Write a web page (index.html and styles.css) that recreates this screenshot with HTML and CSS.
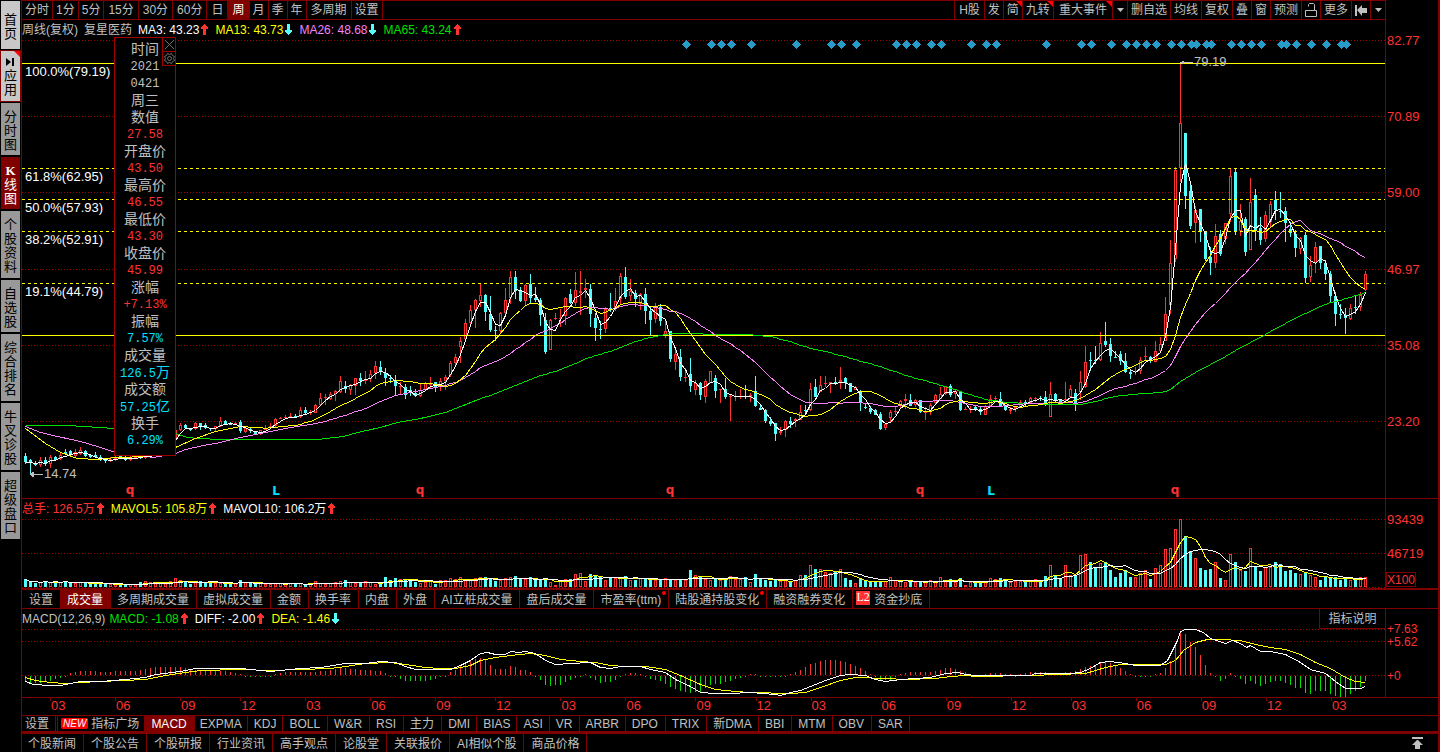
FILE: index.html
```html
<!DOCTYPE html>
<html lang="zh-CN">
<head>
<meta charset="utf-8">
<title>复星医药 周线</title>
<link rel="stylesheet" href="styles.css">
</head>
<body>
<svg class="defs" aria-hidden="true">
  <symbol id="up" viewBox="0 0 7 11"><path d="M3 0h1v1h1v1h1v1h1v2H5v6H2V5H0V3h1V2h1V1h1z" fill="#ff3232"/></symbol>
  <symbol id="down" viewBox="0 0 7 11"><path d="M3 11h1v-1h1V9h1V8h1V6H5V0H2v6H0v2h1v1h1v1h1z" fill="#54fcfc"/></symbol>
</svg>

<nav class="side">
  <button class="light home"><span>首页</span></button>
  <button class="light apps flag"><svg width="9" height="9" viewBox="0 0 9 9"><path d="M0 0v8l5-4zM6 0h2v8H6z"/></svg><span>应用</span></button>
  <button class="s3"><span>分时图</span></button>
  <button class="s3 on"><span><b>K</b>线图</span></button>
  <button class="s4"><span>个股资料</span></button>
  <button class="s3"><span>自选股</span></button>
  <button class="s4"><span>综合排名</span></button>
  <button class="s4"><span>牛叉诊股</span></button>
  <button class="s4"><span>超级盘口</span></button>
</nav>

<main>
  <header class="row">
    <div class="toolbar">
      <button>分时</button><button>1分</button><button>5分</button><button class="mins">15分</button><button class="mins">30分</button><button class="mins">60分</button><button class="mins">日</button><button class="mins on">周</button><button>月</button><button>季</button><button>年</button><button class="mins">多周期</button><button>设置</button>
      <div class="space"></div>
      <button class="mins first">H股</button><button>发</button><button class="flag">简</button><button class="flag">九转</button><button class="wide flag">重大事件</button><button class="drop" aria-label="展开"><svg width="7" height="4" viewBox="0 0 7 4"><path d="M0 0h7L3.500 4z"/></svg></button><button>删自选</button><button>均线</button><button>复权</button><button>叠</button><button>窗</button><button>预测</button><button aria-label="锁定"><svg width="12" height="15" viewBox="0 0 12 15"><path d="M.5 7.500h11v6h-11zM3.500 3.500v-2l1-1h4l1 1v6" fill="none" stroke="#c0c0c0"/></svg></button><button>更多</button><button aria-label="收起"><svg width="12" height="11" viewBox="0 0 12 11"><path d="M0 0h2v11H0zM2 5l5-5v3h5v5H7v3z"/></svg></button><button class="drop last" aria-label="展开"><svg width="7" height="4" viewBox="0 0 7 4"><path d="M0 0h7L3.500 4z"/></svg></button>
    </div>
    <div class="gutter"></div>
  </header>

  <section class="row price">
    <div class="plot">
      <div class="legend">
        <span class="name">周线(复权)</span><span class="name">复星医药</span>
        <span class="white">MA3: 43.23<svg><use href="#up"/></svg></span>
        <span class="yellow">MA13: 43.73<svg><use href="#down"/></svg></span>
        <span class="pink">MA26: 48.68<svg><use href="#down"/></svg></span>
        <span class="green">MA65: 43.24<svg><use href="#up"/></svg></span>
      </div>
      <svg id="price" class="chart grow" viewBox="22 40 1363 458" preserveAspectRatio="none"></svg>
      <aside class="tip">
        <div class="tools"><button aria-label="关闭"><svg width="9" height="9" viewBox="0 0 9 9"><path d="M0 0l9 9M9 0l-9 9"/></svg></button><button aria-label="设置"><svg width="11" height="11" viewBox="0 0 11 11"><path d="M3.500.5l2 1 2-1 1 2 2 1-1 2 1 2-2 1-1 2-2-1-2 1-1-2-2-1 1-2-1-2 2-1z"/><circle cx="5.500" cy="5.500" r="2"/></svg></button></div>
        <dl>
          <dt>时间</dt><dd class="gray">2021</dd><dd class="gray">0421</dd><dt>周三</dt>
          <dt>数值</dt><dd>27.58</dd>
          <dt>开盘价</dt><dd>43.50</dd>
          <dt>最高价</dt><dd>46.55</dd>
          <dt>最低价</dt><dd>43.30</dd>
          <dt>收盘价</dt><dd>45.99</dd>
          <dt>涨幅</dt><dd>+7.13%</dd>
          <dt>振幅</dt><dd class="cyan">7.57%</dd>
          <dt>成交量</dt><dd class="cyan">126.5<span>万</span></dd>
          <dt>成交额</dt><dd class="cyan">57.25<span>亿</span></dd>
          <dt>换手</dt><dd class="cyan">6.29%</dd>
        </dl>
      </aside>
    </div>
    <svg class="axis" viewBox="0 20 52 478" preserveAspectRatio="none">
      <text x="1" y="45">82.77</text><text x="1" y="121">70.89</text><text x="1" y="197">59.00</text><text x="1" y="274">46.97</text><text x="1" y="350">35.08</text><text x="1" y="426">23.20</text>
    </svg>
  </section>

  <section class="row volume">
    <div class="plot">
      <div class="legend">
        <span class="red">总手: 126.5万<svg><use href="#up"/></svg></span>
        <span class="yellow">MAVOL5: 105.8万<svg><use href="#up"/></svg></span>
        <span class="white">MAVOL10: 106.2万<svg><use href="#up"/></svg></span>
      </div>
      <svg id="volume" class="chart h69" viewBox="22 519 1363 69" preserveAspectRatio="none"></svg>
    </div>
    <svg class="axis" viewBox="0 499 52 89" preserveAspectRatio="none">
      <text x="1" y="524">93439</text><text x="1" y="558">46719</text>
      <path d="M.5 572.500h29v14H.5z" class="box"/><text x="1" y="584" class="small">X100</text>
    </svg>
  </section>

  <nav class="tabs mid">
    <button>设置</button><button class="on">成交量</button><button>多周期成交量</button><button>虚拟成交量</button><button>金额</button><button>换手率</button><button>内盘</button><button>外盘</button><button>AI立桩成交量</button><button>盘后成交量</button><button class="dot">市盈率(ttm)</button><button class="dot">陆股通持股变化</button><button>融资融券变化</button><button class="l2"><i>L2</i>资金抄底</button>
  </nav>

  <section class="row macd">
    <div class="plot">
      <div class="legend">
        <span class="gray">MACD(12,26,9)</span>
        <span class="green">MACD: -1.08<svg><use href="#up"/></svg></span>
        <span class="white">DIFF: -2.00<svg><use href="#up"/></svg></span>
        <span class="yellow">DEA: -1.46<svg><use href="#down"/></svg></span>
        <button class="help">指标说明</button>
      </div>
      <svg id="macd" class="chart h68" viewBox="22 629 1363 68" preserveAspectRatio="none"></svg>
    </div>
    <svg class="axis" viewBox="0 609 52 88" preserveAspectRatio="none">
      <text x="1" y="633" class="small">+7.63</text><text x="1" y="646" class="small">+5.62</text><text x="1" y="680" class="small">+0</text>
    </svg>
  </section>

  <div class="row dates">
    <svg id="dates" class="chart h17" viewBox="22 698 1363 17" preserveAspectRatio="none"></svg>
    <div class="gutter"></div>
  </div>

  <nav class="tabs ind">
    <button class="set">设置</button><button class="plaza"><i>NEW</i>指标广场</button><button class="on roomy">MACD</button><button class="tight">EXPMA</button><button>KDJ</button><button class="roomy">BOLL</button><button class="roomy">W&amp;R</button><button class="roomy">RSI</button><button class="roomy">主力</button><button>DMI</button><button>BIAS</button><button>ASI</button><button>VR</button><button>ARBR</button><button class="roomy">DPO</button><button class="roomy">TRIX</button><button>新DMA</button><button class="roomy">BBI</button><button>MTM</button><button class="roomy">OBV</button><button>SAR</button>
  </nav>

  <footer class="tabs foot">
    <button>个股新闻</button><button>个股公告</button><button>个股研报</button><button>行业资讯</button><button>高手观点</button><button>论股堂</button><button>关联报价</button><button>AI相似个股</button><button>商品价格</button>
    <div class="space"></div>
    <button class="top" aria-label="置顶"><svg width="11" height="12" viewBox="0 0 11 12"><path d="M0 0h11v2H0zM5 3h1l5 5H8v4H3V8H0z"/></svg></button>
  </footer>
</main>
<script src="chart.js"></script>
</body>
</html>
```

FILE: styles.css
```css
* { box-sizing: border-box; }

body {
  margin: 0;
  display: flex;
  min-height: 100vh;
  background: #000;
  color: #c0c0c0;
  font: 12px/18px "Liberation Sans", "Noto Sans CJK SC", sans-serif;
}

button {
  margin: 0;
  padding: 0;
  border: 0;
  background: none;
  color: inherit;
  font: inherit;
  white-space: nowrap;
  cursor: pointer;
}

button svg { fill: #c0c0c0; }
.defs { position: absolute; width: 0; height: 0; }
.space { flex: 1; }

.white { color: #fff; }
.yellow { color: #ff0; }
.pink { color: #f880f8; }
.green { color: #00e000; }
.red { color: #ff3232; }

/* left rail */
.side {
  width: 21px;
  padding: 1px 1px 0 1px;
  display: flex;
  flex-direction: column;
  gap: 2px;
  flex: none;
}

.side button {
  display: flex;
  flex-direction: column;
  align-items: center;
  justify-content: center;
  padding-top: 3px;
  background: #999;
  color: #000;
  font-size: 13px;
  line-height: 14px;
}

.side span { width: 14px; white-space: normal; word-break: break-all; text-align: center; }
.side b { display: block; font-family: "Liberation Serif", serif; }
.side .light { background: #c8c8c8; }
.side .home { height: 48px; }
.side .apps { height: 50px; outline: 1px solid #800000; }
.side .apps svg { fill: #000; margin-bottom: 2px; }
.side .s3 { height: 52px; }
.side .s4 { height: 67px; }
.side .on { background: #800000; color: #fff; }

.flag { position: relative; }
.flag::after {
  content: "";
  position: absolute;
  top: 0;
  right: 0;
  border: 3px solid transparent;
  border-top-color: #f00;
  border-right-color: #f00;
}

main {
  flex: 1;
  min-width: 0;
  display: flex;
  flex-direction: column;
  border-left: 1px solid #800000;
  border-right: 2px solid #800000;
}

.row { display: flex; }
.gutter, .axis { width: 52px; flex: none; }

.toolbar {
  flex: 1;
  display: flex;
  height: 20px;
  border: solid #800000;
  border-width: 1px 1px 1px 0;
  line-height: 20px;
}

.toolbar button {
  padding: 0 3px;
  border-right: 1px solid #800000;
  display: flex;
  align-items: center;
}

.toolbar .wide { padding: 0 5px; }
.toolbar .mins { padding: 0 4px; }
.toolbar .first { border-left: 1px solid #800000; }
.toolbar .drop { padding: 0 3px 0 4px; }
.toolbar .last { border-right: 0; }
.on { background: #800000; color: #fff; }

.plot {
  position: relative;
  flex: 1;
  min-width: 0;
  display: flex;
  flex-direction: column;
  border-right: 1px solid #800000;
}

.price { flex: 1; border-bottom: 1px solid #800000; }
.legend { display: flex; height: 20px; gap: 7px; line-height: 20px; white-space: nowrap; }
.legend .name { margin-right: -1px; }
.legend span svg { width: 7px; height: 11px; margin-left: 2px; vertical-align: -1px; }
.chart { display: block; width: 100%; }
.grow { flex: 1; min-height: 458px; }
.h69 { height: 69px; }
.h68 { height: 68px; }
.h17 { height: 17px; flex: 1; min-width: 0; }
.axis { align-self: stretch; }
.axis text, .chart text { font-size: 13px; fill: #ff3232; }
.axis .small { font-size: 12px; }
.axis .box { fill: none; stroke: #800000; shape-rendering: crispEdges; }
.chart .fib { fill: #fff; }
.chart .note { fill: #c0c0c0; }
.chart .mark { font: bold 12px "DejaVu Sans", sans-serif; text-anchor: middle; }

/* cursor data window */
.tip {
  position: absolute;
  left: 92px;
  top: 17px;
  width: 62px;
  height: 419px;
  background: #000;
  border: 1px solid #a00000;
}

.tip dl { margin: 0; padding-top: 3px; text-align: center; }
.tip dt { font-size: 14px; line-height: 17px; }
.tip dd { margin: 0; height: 17px; padding-top: 1px; color: #ff3232; font: 12px/17px "Liberation Mono", "Noto Sans CJK SC", monospace; }
.tip dd span { font-size: 14px; line-height: 16px; }
.tip .gray { color: #c0c0c0; }
.tip .cyan { color: #00e0ff; }
.tools { position: absolute; right: 0; top: 0; width: 13px; }
.tools button {
  display: grid;
  place-items: center;
  width: 13px;
  height: 14px;
  border: solid #a00000;
  border-width: 0 0 1px 1px;
}
.tools svg { fill: none; stroke: #707070; }

/* tab strips */
.tabs { display: flex; }
.tabs button { border-right: 1px solid #800000; padding: 0 7px 0 6px; }
.mid { height: 21px; line-height: 20px; border: solid #800000; border-width: 2px 0 1px; }
.mid button:first-child { padding-left: 7px; }
.mid .l2 { display: flex; gap: 4px; padding: 0 7px 0 3px; }
.mid i { background: #ff3232; color: #fff; font: 12px/13px "Liberation Serif", serif; width: 14px; height: 14px; margin-top: 1px; }
.dot { position: relative; }
.dot::after { content: ""; position: absolute; top: 1px; right: 2px; width: 4px; height: 4px; border-radius: 50%; background: #f00; }
.help { margin-left: auto; width: 66px; border: solid #800000; border-width: 0 0 1px 1px; }
.macd .legend .gray { margin-right: -3px; }
.dates { border-top: 1px solid #800000; }
.ind { height: 19px; line-height: 16px; border-top: 1px solid #800000; border-bottom: 3px solid #800000; }
.ind .set { padding: 0 6px 0 3px; margin-right: 1px; }
.ind button { padding: 0 6px; }
.ind .tight { padding: 0 5px; }
.ind .roomy { padding: 0 7px 0 6px; }
.ind .plaza { display: flex; gap: 3px; padding: 0 5px 0 3px; border-left: 1px solid #800000; }
.ind i { background: #f00; color: #fff; font-size: 10px; line-height: 11px; height: 11px; margin-top: 2px; padding: 0 2px; border-radius: 2px; }
.foot { height: 18px; line-height: 20px; }
.foot button { padding: 0 7px; }
.foot button:first-child { padding: 0 7px 0 6px; }
.foot .top { border: 0; padding: 3px 15px; line-height: 0; }
```

FILE: chart.js
```js
const RED = '#ff3232', CYAN = '#54fcfc', GREEN = '#00e000';
const X0 = 25, STEP = 5;

// One entry per week: direction, then high, body top, body bottom, low.
const bars = `d453,456,462,464 d459,460,462,475 d461,463,465,466 u457,460,465,467 d457,460,464,466 u455,457,464,468 d456,457,460,461 u453,455,459,460
d449,452,454,455 d450,451,454,456 u449,452,456,457 u447,450,454,455 d450,451,456,457 d454,455,457,458 d452,455,457,458 d455,457,460,461 d458,459,461,463 u457,459,461,462
u455,457,459,461 d455,456,458,459 d456,457,460,461 u456,457,460,461 u455,456,458,459 d455,456,458,459 u454,455,458,459 u452,454,456,457 u450,452,454,455 u448,450,453,454 u445,447,450,451 u440,443,447,448
u428,430,440,441 u423,425,430,431 d424,425,428,429 d428,429,430,431 u422,423,429,430 d423,423,426,430 d423,425,428,429 d428,428,429,431 u426,426,429,431 u417,421,426,427
d420,421,424,424 d422,423,425,425 u422,423,425,425 d420,422,431,433 u428,428,432,433 d427,429,431,433 d431,432,434,434 u430,430,434,435 u425,428,430,430 u423,426,428,429
u418,419,426,427 u417,418,419,419 u415,417,418,419 u413,416,417,418 d414,416,418,418 u407,410,417,418 d407,410,413,414 u410,412,413,415 u404,405,413,413 u393,398,405,406
u394,397,398,405 u392,394,399,400 u390,391,394,401 u376,381,392,393 d381,386,389,393 u384,385,390,395 u378,378,386,395 d373,378,381,386 u371,379,381,384 u370,374,379,382
u361,366,373,379 d361,367,372,375 d368,373,378,386 d375,378,379,383 d375,380,386,395 u382,386,387,394 d384,387,395,399 d386,390,393,396 d389,393,396,397 u384,390,396,397
u382,383,390,391 u377,384,385,388 d382,382,387,392 u378,381,386,391 u375,377,381,390 u361,363,375,377 u354,357,363,365 u337,341,347,363 u319,323,339,340 u305,310,323,327
u299,300,310,328 u284,295,301,307 d294,295,312,321 d296,314,330,332 d326,330,331,341 u312,313,331,333 u288,300,313,315 u271,277,298,304 d271,277,291,299 d287,290,301,302
u284,285,301,305 d274,284,298,303 d287,298,300,302 d298,300,315,326 d313,320,352,354 u319,320,350,350 u313,318,319,320 u309,318,319,327 u297,298,316,325 d289,294,303,304
u272,290,303,306 u271,291,293,315 u279,288,290,298 d284,289,314,327 d313,318,328,341 d321,329,330,339 u307,309,329,333 d293,308,310,312 u288,301,309,311 u273,276,299,305
d267,277,297,299 u279,291,296,301 d290,293,299,307 u293,294,304,310 d288,294,311,324 d307,311,320,335 u303,306,319,323 d304,307,321,326 u320,331,335,338 d331,331,359,362
u347,354,362,370 d349,357,377,381 u368,377,378,382 d358,374,386,392 u380,383,390,395 d382,383,395,400 u379,381,397,403 u371,371,383,383 d375,378,391,398 u389,389,390,403
d378,389,397,399 u395,396,397,421 u391,396,397,401 u389,396,397,399 d385,396,397,399 u393,395,397,402 d376,391,406,407 d405,408,410,410 d409,410,421,423 d417,421,424,426
d423,423,434,441 u427,431,433,435 u420,421,430,437 d417,421,424,428 u418,419,421,427 u405,412,420,420 d405,410,411,415 u383,389,410,411 d379,387,397,397 u376,385,392,392
u376,383,384,387 u382,382,384,393 d377,382,383,385 u367,380,382,389 d377,378,383,389 d383,383,392,392 u386,387,390,390 d390,392,402,411 d403,407,408,409 d406,408,412,414
d409,410,415,415 d412,414,429,430 u423,424,428,430 u410,412,418,422 u406,411,412,415 u400,401,406,409 u394,399,401,409 d394,400,406,406 u399,400,405,407 d400,400,412,413
u407,412,413,420 u403,405,411,415 u394,395,403,405 u387,394,399,399 u386,386,394,395 d384,386,395,397 u390,391,394,399 d391,391,410,411 u407,409,410,410 u406,409,410,413
d406,407,410,411 d407,409,412,415 u405,406,415,415 u395,399,406,407 u396,398,399,402 d392,399,406,406 d405,406,410,411 u407,409,411,414 u406,407,409,412 u400,402,407,407
d400,402,404,406 u397,398,403,404 u397,398,399,402 d396,398,399,401 d391,397,404,406 u382,394,417,417 d393,394,401,402 d399,400,403,404 u382,399,400,401 u385,389,397,397
d389,393,404,411 u371,382,392,400 u346,362,387,388 d352,360,361,371 d346,360,361,364 u332,343,360,361 d322,341,345,347 d338,344,356,362 d351,357,358,358 d351,354,361,365
d353,361,372,373 d370,372,374,379 u367,371,372,375 u357,360,371,374 u347,356,357,361 d356,357,361,363 u341,351,362,362 u337,344,351,353 u297,314,341,341 u240,263,305,314
u167,170,259,262 u63,123,168,182 d133,133,196,209 d182,191,226,229 u206,210,223,243 d209,209,232,242 d231,231,259,261 d247,257,263,275 u224,236,263,268 d230,234,254,256
u223,223,239,244 u169,176,214,222 d169,172,232,235 u204,221,231,236 d217,219,252,256 u178,202,250,250 d189,195,231,241 d217,228,240,245 u211,215,239,242 u201,204,222,228
d191,200,210,220 d192,211,212,218 d207,211,223,242 d222,229,233,237 d230,234,248,257 u237,238,249,254 d232,235,278,283 u256,265,277,282 u242,247,263,273 d246,246,263,269
d260,263,274,280 d271,274,296,302 d292,296,314,326 d304,314,315,319 d308,315,318,334 u304,308,319,320 d296,307,308,314 u292,295,307,311 u271,274,290,291`
  .split(/\s+/).map(s => [s[0] === 'u', ...s.slice(1).split(',').map(Number)]);

const volumes = `8 5 4 5 6 5 6 5 6 5 4 5 4 4 4 4 3 3 3 3 2 3 3 5 6 5 4 4 4 6 9 7 6 3 5 6 5 5 4 4 4 4 4 7 5 4 4 4 3 3 4 4 3 4 3 4 3 4 6 4
3 4 5 6 7 5 4 5 6 5 3 3 10 7 9 8 8 8 5 4 5 6 3 7 7 9 8 10 8 7 9 10 10 8 6 7 9 10 11 8 8 10 8 8 8 5 2 7 8 8 13 14 6 13 12 11 7 9 9 10
11 7 7 9 9 8 7 8 9 8 7 8 7 17 12 10 8 7 9 7 9 11 8 8 10 5 13 9 7 6 7 6 7 6 7 12 12 22 18 18 15 14 15 18 9 7 4 9 6 5 6 6 6 10 7 6 5 7 5 5
5 7 5 10 7 8 5 9 2 5 6 5 6 9 8 9 8 5 6 6 6 6 8 6 11 22 11 9 22 12 11 32 33 25 20 24 25 17 10 14 17 10 10 14 17 8 19 22 38 39 58 68 51 36 29 19 17 18 25 9
7 33 25 17 16 39 21 16 20 20 25 23 16 17 14 13 15 12 10 7 10 10 10 7 9 7 8 10 10`.split(/\s+/).map(Number);

const prefix13 = [25,428,45,443,60,452,77,458,97,459,115,457,148,456,175,447,195,438,215,431,235,427];
const prefix26 = [25,426,40,432,57,436,80,441,97,446,115,452,153,457,175,453,185,449,203,445,220,442,235,438,260,433,285,428,303,425];
const prefix65 = [25,425,67,425,100,427,113,428,175,433,187,437,198,438,220,439,317,439,343,436,357,432,380,427,397,422,420,418,445,412,483,397];

const hist = [25,-6,30,-7,40,-7,50,-5,60,-2,66,0,70,2,80,4,90,4,105,3,120,4,135,4,145,6,155,8,180,8,195,5,210,4,220,4,230,3,240,1,250,-1,265,-1,275,1,285,3,315,3,330,5,340,7,350,6,360,5,380,4,388,1,395,-1,405,-5,425,-5,435,-3,445,0,455,5,465,13,475,16,480,17,485,15,490,10,495,6,505,6,510,9,515,8,520,5,525,5,530,3,535,0,545,-9,550,-10,560,-9,567,-5,575,-2,585,1,590,-2,600,-7,610,-6,615,-4,620,0,630,2,640,1,650,-3,660,-5,670,-11,680,-15,690,-17,700,-16,710,-9,720,-8,730,-5,740,-2,750,1,765,0,775,-1,785,-1,795,3,800,5,810,11,825,15,835,15,845,13,855,9,865,4,872,0,880,-4,890,-4,900,1,910,3,930,3,940,5,945,7,955,6,960,4,970,1,980,-1,990,2,1000,2,1015,0,1030,3,1060,2,1075,4,1085,8,1095,10,1105,13,1115,10,1125,4,1132,0,1150,-1,1160,2,1165,7,1170,14,1175,30,1180,44,1185,41,1190,33,1195,28,1200,20,1205,10,1210,2,1215,-1,1220,-5,1225,-3,1230,2,1235,-1,1240,-3,1245,-8,1250,-5,1255,-8,1260,-10,1265,-8,1270,-6,1280,-5,1285,-7,1290,-9,1295,-12,1300,-12,1305,-17,1310,-18,1315,-15,1325,-15,1330,-18,1335,-20,1340,-21,1345,-21,1350,-18,1355,-15,1360,-11,1365,-5];
const diff = [25,681,33,684,50,685,60,685,70,683,80,681,100,681,125,679,145,677,155,674,180,671,195,668,240,668,270,671,300,668,320,667,345,663,365,663,380,661,395,662,405,666,415,669,450,669,460,665,470,660,480,653,487,652,495,654,505,654,510,651,518,652,525,651,535,653,545,660,555,664,570,663,590,662,600,667,610,668,620,666,640,666,650,669,665,672,675,679,690,686,700,692,715,693,730,693,750,692,775,694,780,695,790,692,800,690,810,686,825,680,840,675,850,674,865,675,875,679,885,681,900,679,915,678,930,677,945,673,958,672,965,674,975,675,1030,675,1035,673,1070,673,1080,672,1090,668,1100,662,1110,661,1125,663,1135,665,1160,665,1167,660,1172,650,1177,640,1180,631,1185,629,1195,629,1203,632,1210,638,1225,643,1232,640,1240,643,1246,647,1250,645,1260,651,1270,651,1285,654,1300,662,1310,669,1325,673,1335,681,1345,688,1360,688,1365,686];
const dea = [25,677,35,680,50,682,65,683,80,682,100,681,145,679,165,675,185,672,200,670,240,669,270,670,300,669,330,668,345,666,365,663,390,662,405,664,425,667,440,668,455,668,470,665,480,660,495,657,510,655,530,653,545,655,560,659,580,661,595,662,610,665,625,666,645,666,665,669,680,675,700,684,715,689,735,691,750,692,790,693,805,692,820,687,840,680,855,677,885,678,905,679,935,678,950,676,965,675,975,676,1030,675,1085,673,1105,667,1120,664,1165,664,1175,660,1183,650,1195,642,1207,639,1220,639,1240,640,1255,644,1270,647,1285,649,1300,654,1315,662,1330,668,1345,677,1355,681,1365,682];

const at = i => X0 + i * STEP;
const rect = (x, y, w, h, c) => `<rect x="${x}" y="${y}" width="${w}" height="${h}" fill="${c}"/>`;
const box = (x, y, h, c) => `<rect x="${x - 0.5}" y="${y + 0.5}" width="2" height="${h - 1}" fill="#000" stroke="${c}"/>`;
const line = (y, c, dash) => `<path d="M22 ${y + 0.5}H1385" stroke="${c}"${dash ? ` stroke-dasharray="${dash}"` : ''}/>`;
const text = (x, y, s, cls, c) => `<text x="${x}" y="${y}" class="${cls}"${c ? ` style="fill:${c}"` : ''}>${s}</text>`;
const curve = (pts, c) => `<polyline fill="none" stroke="${c}" points="${pts.map(p => `${p[0] + 0.5},${p[1] + 0.5}`).join(' ')}"/>`;
const pairs = a => a.reduce((r, v, i) => (i % 2 ? r[r.length - 1].push(v) : r.push([v]), r), []);

function average(values, n, prefix = []) {
  const pts = pairs(prefix);
  const from = pts.length ? pts[pts.length - 1][0] + STEP : X0;
  values.forEach((_, i) => {
    if (at(i) < from) return;
    const part = values.slice(Math.max(0, i - n + 1), i + 1);
    pts.push([at(i), Math.round(part.reduce((a, b) => a + b, 0) / part.length)]);
  });
  return pts;
}

function sample(points, x) {
  const p = pairs(points);
  const k = p.findIndex(q => q[0] >= x);
  if (k < 1) return p[0][1];
  const [a, b] = [p[k - 1], p[k]];
  return a[1] + (b[1] - a[1]) * (x - a[0]) / (b[0] - a[0]);
}

function draw(id, parts) {
  document.getElementById(id).innerHTML = `<g shape-rendering="crispEdges">${parts.join('')}</g>`;
}

const closes = bars.map(b => b[0] ? b[2] : b[3]);
const diamonds = [686,711,721,731,751,796,831,841,856,896,906,916,931,941,971,986,996,1046,1081,1091,1111,1126,1136,1146,1156,1171,1181,1191,1196,1206,1211,1231,1241,1251,1261,1281,1286,1296,1311,1326,1341,1346];
const candles = bars.map(([up, hi, top, bottom, lo], i) => {
  const x = at(i), c = up ? RED : CYAN, h = Math.max(1, bottom - top);
  return rect(x, hi, 1, Math.max(1, lo - hi), c) + (up && h > 2 ? box(x, top, h, c) : rect(x - 1, top, 3, h, c));
});
draw('price', [
  ...[40, 116, 192, 269, 345, 421].map(y => line(y, '#a00000', '1 2')),
  ...candles,
  line(63, '#ff0'), line(335, '#ff0'),
  ...[168, 199, 231, 283].map(y => line(y, '#ff0', '3 3')),
  curve(average(closes, 65, prefix65), GREEN),
  curve(average(closes, 26, prefix26), '#f880f8'),
  curve(average(closes, 13, prefix13), '#ff0'),
  curve(average(closes, 3), '#fff'),
  ...diamonds.map(x => `<path d="M${x + 0.5} 40l4.500 4.500-4.500 4.500-4.500-4.500z" fill="#289cc8"/>`),
  '<path d="M30 474.500h13M31 473.500h3M31 475.500h3M32 472.500h2M32 476.500h2M1180 62.500h13M1182 61.500h2M1182 63.500h2" stroke="#c0c0c0"/>',
  text(25, 76, '100.0%(79.19)', 'fib'), text(25, 181, '61.8%(62.95)', 'fib'), text(25, 212, '50.0%(57.93)', 'fib'),
  text(25, 244, '38.2%(52.91)', 'fib'), text(25, 296, '19.1%(44.79)', 'fib'),
  text(44, 478, '14.74', 'note'), text(1194, 66, '79.19', 'note'),
  ...[130, 420, 670, 920, 1175].map(x => text(x, 494, 'q', 'mark')),
  ...[276, 991].map(x => text(x, 495, 'L', 'mark', '#00e0ff'))
]);

const tops = volumes.map(v => 587 - v);
draw('volume', [
  ...[519, 553, 587].map(y => line(y, '#a00000', '1 2')),
  ...volumes.map((v, i) => bars[i][0] && v > 2 ? box(at(i), 587 - v, v, RED) : rect(at(i) - 1, 587 - v, 3, v, bars[i][0] ? RED : CYAN)),
  curve(average(tops, 5), '#ff0'), curve(average(tops, 10), '#fff')
]);

draw('macd', [
  ...[629, 641, 675].map(y => line(y, '#a00000', '1 2')),
  ...bars.map((_, i) => {
    const v = Math.round(sample(hist, at(i)));
    return v > 0 ? rect(at(i), 675 - v, 1, v, RED) : rect(at(i), 676, 1, Math.max(1, -v), GREEN);
  }),
  curve(pairs(dea), '#ff0'), curve(pairs(diff), '#fff')
]);

const ticks = [50,115,180,240,305,370,435,495,560,625,695,755,810,880,945,1010,1070,1135,1200,1265,1330];
const months = '03 06 09 12 03 06 09 12 03 06 09 12 03 06 09 12 03 06 09 12 03'.split(' ');
draw('dates', ticks.map((x, i) => rect(x, 698, 1, 3, '#800000') + text(x + 1, 710, months[i], '')));
```
